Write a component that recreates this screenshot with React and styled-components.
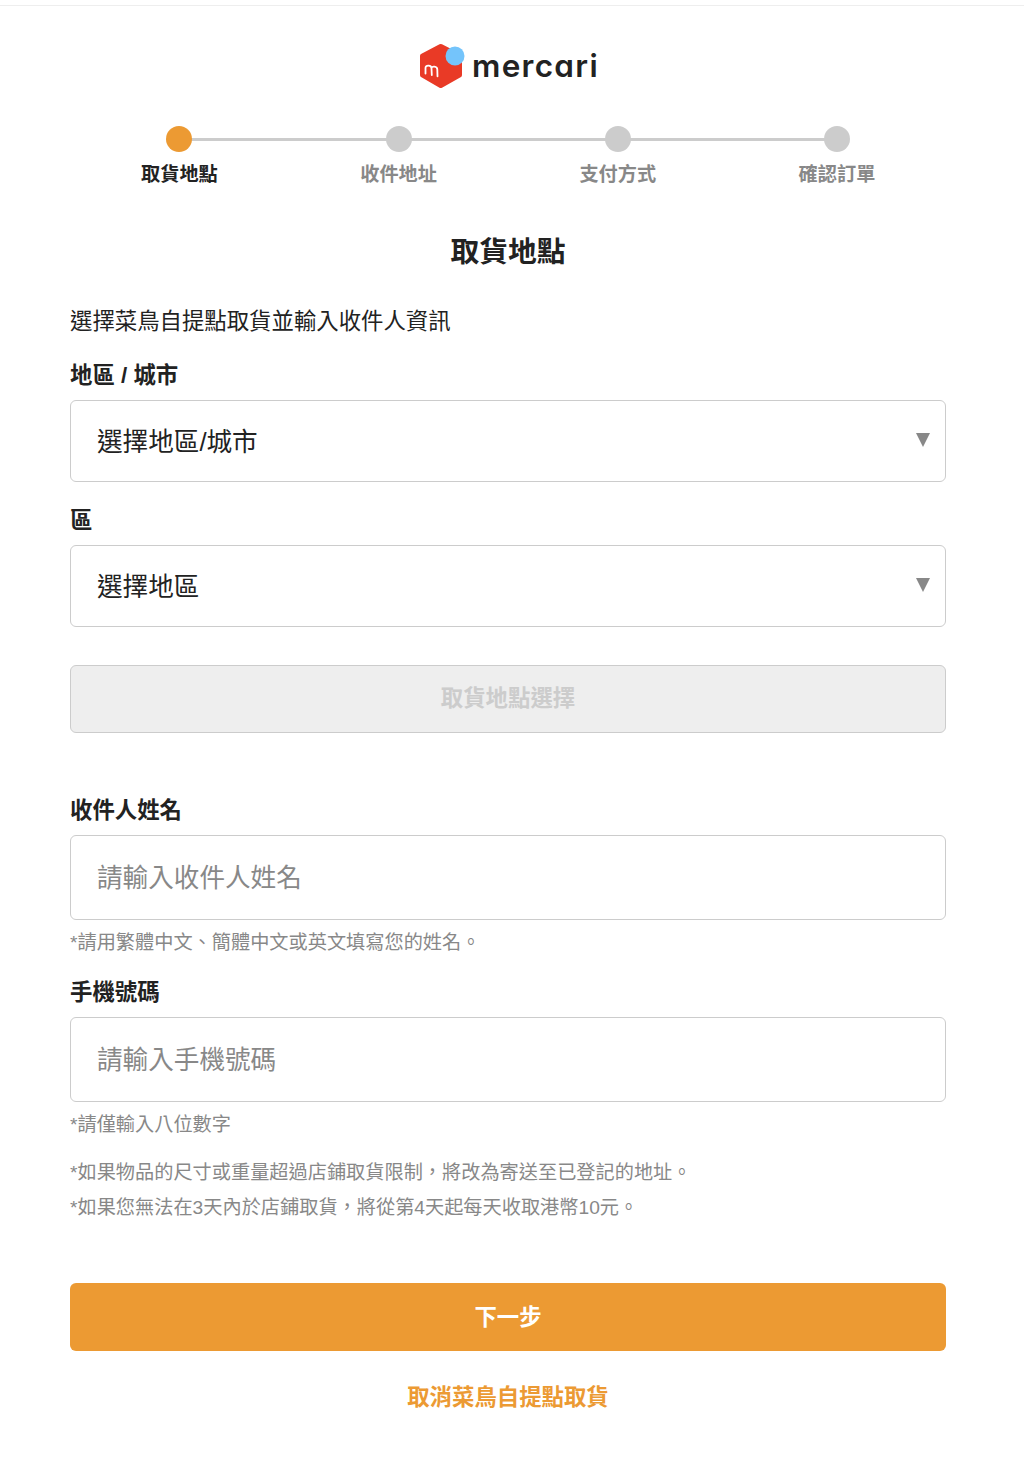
import styled, { createGlobalStyle } from "styled-components";

const steps = ["取貨地點", "收件地址", "支付方式", "確認訂單"];

const GlobalStyle = createGlobalStyle`
  html, body {
    margin: 0;
    padding: 0;
    background: #fff;
  }
  body {
    font-family: "Liberation Sans", "Noto Sans CJK TC", sans-serif;
    color: #222;
  }
  * {
    box-sizing: border-box;
  }
`;

const Logo = () => (
  <LogoRow>
    <svg width="46" height="46" viewBox="0 0 46 46" aria-hidden="true">
      <path
        d="M19.500 1.300 Q20.700 0.700 22 1.300 L41 11 Q42 11.500 42 13 L42 32 Q42 33.500 41 34 L22 44.700 Q20.700 45.300 19.500 44.700 L1 34 Q0 33.500 0 32 L0 13 Q0 11.500 1 11 Z"
        fill="#e93a26"
      />
      <circle cx="35" cy="13" r="9.500" fill="#74c4fb" />
      <path
        d="M5.500 30.500 L5.500 25 Q5.500 22.500 8.500 22.700 Q11.500 22.900 11.500 25.500 L11.800 32 M11.500 25.500 Q11.500 23.300 14.500 23.700 Q17.300 24.100 17.300 26.500 L17.500 33.300"
        fill="none"
        stroke="#fff"
        strokeWidth="1.800"
        strokeLinecap="round"
      />
    </svg>
    <LogoText>mercari</LogoText>
  </LogoRow>
);

const SelectField = ({ label, placeholder }) => (
  <Field>
    <Label>{label}</Label>
    <SelectWrap>
      <Select defaultValue="">
        <option value="">{placeholder}</option>
      </Select>
    </SelectWrap>
  </Field>
);

const App = () => {
  return (
    <Page>
      <GlobalStyle />
      <Logo />
      <Stepper>
        {steps.map((step, idx) => (
          <Step key={step} $first={idx === 0} $last={idx === steps.length - 1}>
            <Dot $active={idx === 0} />
            <StepLabel $active={idx === 0}>{step}</StepLabel>
          </Step>
        ))}
      </Stepper>
      <Title>取貨地點</Title>
      <Intro>選擇菜鳥自提點取貨並輸入收件人資訊</Intro>
      <SelectField label="地區 / 城市" placeholder="選擇地區/城市" />
      <SelectField label="區" placeholder="選擇地區" />
      <PickButton disabled>取貨地點選擇</PickButton>
      <InputField>
        <Label>收件人姓名</Label>
        <Input placeholder="請輸入收件人姓名" />
        <Hint>*請用繁體中文、簡體中文或英文填寫您的姓名。</Hint>
      </InputField>
      <InputField $phone>
        <Label>手機號碼</Label>
        <Input placeholder="請輸入手機號碼" />
        <Hint>*請僅輸入八位數字</Hint>
      </InputField>
      <Notes>
        <div>*如果物品的尺寸或重量超過店鋪取貨限制，將改為寄送至已登記的地址。</div>
        <div>*如果您無法在3天內於店鋪取貨，將從第4天起每天收取港幣10元。</div>
      </Notes>
      <NextButton>下一步</NextButton>
      <CancelLink>取消菜鳥自提點取貨</CancelLink>
    </Page>
  );
};

const Page = styled.div`
  width: 1024px;
  min-height: 1457px;
  margin-top: 5px;
  padding: 37px 78px 0 70px;
  border-top: 1px solid #eee;
`;

const LogoRow = styled.div`
  display: flex;
  align-items: center;
  justify-content: center;
  gap: 6px;
  height: 46px;
`;

const LogoText = styled.span`
  width: 124px;
  font-family: "Inter", sans-serif;
  font-size: 31.500px;
  font-weight: 600;
  font-feature-settings: "cv11";
  line-height: 42px;
  letter-spacing: 1.300px;
  white-space: nowrap;
  color: #222;
`;

const Stepper = styled.div`
  display: grid;
  grid-template-columns: repeat(4, 219.200px);
  margin-top: 37px;
  margin-left: -0.200px;
`;

const Step = styled.div`
  position: relative;
  display: flex;
  flex-direction: column;
  align-items: center;

  &::before {
    content: "";
    position: absolute;
    top: 12px;
    left: ${(p) => (p.$first ? "50%" : "0")};
    right: ${(p) => (p.$last ? "50%" : "0")};
    height: 3px;
    background: #ccc;
  }
`;

const Dot = styled.span`
  position: relative;
  width: 26px;
  height: 26px;
  border-radius: 50%;
  background: ${(p) => (p.$active ? "#ec9a33" : "#ccc")};
`;

const StepLabel = styled.span`
  margin-top: 9px;
  font-size: 19.200px;
  font-weight: 700;
  line-height: 28px;
  color: ${(p) => (p.$active ? "#222" : "#888")};
`;

const Title = styled.h1`
  margin: 42px 0 0;
  font-size: 28.800px;
  font-weight: 700;
  line-height: 42px;
  text-align: center;
  color: #222;
`;

const Intro = styled.p`
  margin: 32px 0 0;
  font-size: 22.400px;
  line-height: 34px;
  color: #222;
`;

const Field = styled.div`
  margin-top: 20px;

  & + & {
    margin-top: 22px;
  }
`;

const Label = styled.div`
  margin-bottom: 7px;
  font-size: 22.400px;
  font-weight: 700;
  line-height: 34px;
  color: #222;
`;

const SelectWrap = styled.div`
  position: relative;

  &::after {
    content: "";
    position: absolute;
    top: 33px;
    right: 16px;
    border-left: 7px solid transparent;
    border-right: 7px solid transparent;
    border-top: 14px solid #888;
    pointer-events: none;
  }
`;

const Select = styled.select`
  display: block;
  width: 100%;
  height: 82px;
  padding: 2px 26px 0;
  appearance: none;
  background: #fff;
  border: 1px solid #ccc;
  border-radius: 6px;
  font: inherit;
  font-size: 25.600px;
  color: #222;
`;

const PickButton = styled.button`
  display: block;
  width: 100%;
  height: 68px;
  margin-top: 38px;
  padding: 0 0 7px;
  background: #eee;
  border: 1px solid #ccc;
  border-radius: 6px;
  font: inherit;
  font-size: 22.400px;
  font-weight: 700;
  color: #ccc;
`;

const InputField = styled.div`
  margin-top: ${(p) => (p.$phone ? "19px" : "61px")};
`;

const Input = styled.input`
  display: block;
  width: 100%;
  height: 85px;
  padding: 2px 26px 0;
  background: #fff;
  border: 1px solid #ccc;
  border-radius: 6px;
  font: inherit;
  font-size: 25.600px;
  color: #222;

  &::placeholder {
    color: #888;
    opacity: 1;
  }
`;

const Hint = styled.div`
  margin-top: 9px;
  font-size: 19.200px;
  line-height: 28px;
  color: #888;
`;

const Notes = styled.div`
  margin-top: 17px;
  font-size: 19.200px;
  line-height: 34.560px;
  color: #888;
`;

const NextButton = styled.button`
  display: block;
  width: 100%;
  height: 68px;
  margin-top: 57.880px;
  padding: 0 0 5px;
  background: #ec9a33;
  border: 0;
  border-radius: 6px;
  font: inherit;
  font-size: 22.400px;
  font-weight: 700;
  color: #fff;
`;

const CancelLink = styled.a`
  display: block;
  margin-top: 30px;
  font-size: 22.400px;
  font-weight: 700;
  line-height: 34px;
  text-align: center;
  color: #ec9a33;
`;

export default App;
